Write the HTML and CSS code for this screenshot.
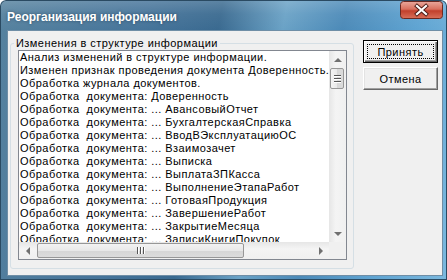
FILE: index.html
```html
<!DOCTYPE html>
<html>
<head>
<meta charset="utf-8">
<link rel="stylesheet" href="styles.css">
</head>
<body>
<div class="window">
  <div class="titlebar">
    <span class="title">Реорганизация информации</span>
    <div class="close">
      <svg width="43" height="18" viewBox="0 0 43 18">
        <defs>
          <linearGradient id="cg" x1="0" y1="0" x2="0" y2="1">
            <stop offset="0" stop-color="#e9a89c"/>
            <stop offset="0.45" stop-color="#d8705e"/>
            <stop offset="0.55" stop-color="#c2402c"/>
            <stop offset="1" stop-color="#d9705a"/>
          </linearGradient>
        </defs>
        <rect x="0.5" y="0.5" width="42" height="17" rx="3" fill="url(#cg)" stroke="#6b2a22"/>
        <path d="M17 5 L26 13 M26 5 L17 13" stroke="#4a1a14" stroke-width="4" stroke-linecap="square"/>
        <path d="M17 5 L26 13 M26 5 L17 13" stroke="#ffffff" stroke-width="2.2" stroke-linecap="square"/>
      </svg>
    </div>
  </div>
  <div class="client">
    <fieldset class="group">
      <legend class="legend">Изменения в структуре информации</legend>
      <div class="listbox">
        <div class="list-main">
          <div class="rows">
            <div class="row">Анализ изменений в структуре информации.</div>
            <div class="row">Изменен признак проведения документа Доверенность.</div>
            <div class="row">Обработка журнала документов.</div>
            <div class="row">Обработка  документа: Доверенность</div>
            <div class="row">Обработка  документа: ... АвансовыйОтчет</div>
            <div class="row">Обработка  документа: ... БухгалтерскаяСправка</div>
            <div class="row">Обработка  документа: ... ВводВЭксплуатациюОС</div>
            <div class="row">Обработка  документа: ... Взаимозачет</div>
            <div class="row">Обработка  документа: ... Выписка</div>
            <div class="row">Обработка  документа: ... ВыплатаЗПКасса</div>
            <div class="row">Обработка  документа: ... ВыполнениеЭтапаРабот</div>
            <div class="row">Обработка  документа: ... ГотоваяПродукция</div>
            <div class="row">Обработка  документа: ... ЗавершениеРабот</div>
            <div class="row">Обработка  документа: ... ЗакрытиеМесяца</div>
            <div class="row">Обработка  документа: ... ЗаписиКнигиПокупок</div>
          </div>
          <div class="vscroll">
            <div class="sbtn"><span class="tri up"></span></div>
            <div class="vthumb"><span class="grip-h"></span><span class="grip-h"></span><span class="grip-h"></span></div>
            <div class="track"></div>
            <div class="sbtn"><span class="tri down"></span></div>
          </div>
        </div>
        <div class="hrow">
          <div class="hscroll">
            <div class="sbtn"><span class="tri left"></span></div>
            <div class="hthumb"><span class="grip-v"></span><span class="grip-v"></span><span class="grip-v"></span></div>
            <div class="track"></div>
            <div class="sbtn"><span class="tri right"></span></div>
          </div>
          <div class="corner"></div>
        </div>
      </div>
    </fieldset>
    <div class="buttons">
      <button class="btn default"><span class="focus">Принять</span></button>
      <button class="btn">Отмена</button>
    </div>
  </div>
</div>
</body>
</html>
```

FILE: styles.css
```css
html, body {
  margin: 0;
  padding: 0;
  width: 447px;
  height: 280px;
  overflow: hidden;
  background: #ffffff;
}

.window {
  box-sizing: border-box;
  width: 447px;
  height: 280px;
  display: flex;
  flex-direction: column;
  border-radius: 6px 6px 0 0;
  background:
    linear-gradient(to bottom, rgba(255,255,255,0.18) 0px, rgba(255,255,255,0.05) 14px, rgba(0,0,0,0) 30px),
    linear-gradient(100deg, #56829f 0%, #46749a 30%, #3a6a90 45%, #6aa2c6 58%, #4c8ab8 70%, #5fa4d2 85%, #7bb8de 100%);
  box-shadow: inset 0 0 0 1px #2a4a62;
}

.titlebar {
  height: 30px;
  display: flex;
  justify-content: space-between;
  align-items: flex-start;
  padding: 0 4px 0 7px;
}

.title {
  margin-top: 9px;
  font-family: "Liberation Sans", Arial, sans-serif;
  font-weight: bold;
  font-size: 12px;
  line-height: 16px;
  color: #ffffff;
  text-shadow: 0 0 3px rgba(20,40,60,0.6);
}

.close {
  margin-top: 1px;
  height: 18px;
}

.close svg {
  display: block;
}

.client {
  flex: 1;
  margin: 0 4px 4px 7px;
  background: #f0f0f0;
  border: 1px solid #6f8ea6;
  display: flex;
  align-items: flex-start;
  font-family: "Liberation Sans", Arial, sans-serif;
  font-size: 11px;
  letter-spacing: 0.45px;
  color: #000000;
}

.group {
  box-sizing: border-box;
  width: 344px;
  height: 232px;
  margin: 6px 0 0 2px;
  padding: 0 6px 8px 7px;
  border: 1px solid #d5dfe5;
  border-radius: 3px;
  min-width: 0;
}

.legend {
  padding: 0 2px;
  margin-left: -4px;
  font-size: 11px;
  line-height: 13px;
}

.listbox {
  box-sizing: border-box;
  width: 329px;
  height: 210px;
  border: 1px solid #828790;
  background: #ffffff;
  display: flex;
  flex-direction: column;
}

.list-main {
  flex: 1;
  display: flex;
  min-height: 0;
}

.rows {
  flex: 1;
  overflow: hidden;
  padding-left: 1px;
}

.row {
  height: 13px;
  line-height: 13px;
  white-space: pre;
}

.vscroll {
  width: 17px;
  display: flex;
  flex-direction: column;
  background: linear-gradient(to right, #e6e6e6, #f4f4f4 40%, #f0f0f0);
}

.hrow {
  height: 17px;
  display: flex;
}

.hscroll {
  flex: 1;
  display: flex;
  background: linear-gradient(to bottom, #e6e6e6, #f4f4f4 40%, #f0f0f0);
}

.corner {
  width: 17px;
  background: #f0f0f0;
}

.sbtn {
  width: 17px;
  height: 17px;
  display: flex;
  align-items: center;
  justify-content: center;
  flex: none;
}

.track {
  flex: 1;
}

.tri {
  width: 0;
  height: 0;
  border: 4px solid transparent;
}

.tri.up {
  border-bottom-color: #707070;
  border-top-width: 0;
}

.tri.down {
  border-top-color: #707070;
  border-bottom-width: 0;
}

.tri.left {
  border-right-color: #707070;
  border-left-width: 0;
}

.tri.right {
  border-left-color: #707070;
  border-right-width: 0;
}

.vthumb {
  box-sizing: border-box;
  height: 21px;
  margin: 0 2px 0 1px;
  border: 1px solid #979797;
  border-radius: 2px;
  background: linear-gradient(to right, #f3f3f3, #e8e8e8 50%, #d6d6d6 51%, #dcdcdc);
  display: flex;
  flex-direction: column;
  align-items: center;
  justify-content: center;
  gap: 2px;
}

.grip-h {
  width: 7px;
  height: 1px;
  background: #555555;
  box-shadow: 0 1px 0 #ffffff;
}

.hthumb {
  box-sizing: border-box;
  width: 207px;
  margin: 1px 0 1px 1px;
  border: 1px solid #979797;
  border-radius: 2px;
  background: linear-gradient(to bottom, #f3f3f3, #e8e8e8 50%, #d6d6d6 51%, #dcdcdc);
  display: flex;
  align-items: center;
  justify-content: center;
  gap: 2px;
}

.grip-v {
  width: 1px;
  height: 7px;
  background: #555555;
  box-shadow: 1px 0 0 #ffffff;
}

.buttons {
  margin: 9px 0 0 9px;
  display: flex;
  flex-direction: column;
  gap: 4px;
}

.btn {
  box-sizing: border-box;
  width: 75px;
  height: 23px;
  padding: 0;
  margin: 0;
  font-family: "Liberation Sans", Arial, sans-serif;
  font-size: 11px;
  letter-spacing: 0.45px;
  color: #000000;
  background: #f0f0f0;
  border: 1px solid;
  border-color: #ffffff #696969 #696969 #ffffff;
  box-shadow: inset -1px -1px 0 #a0a0a0, inset 1px 1px 0 #e3e3e3;
  display: flex;
  align-items: center;
  justify-content: center;
}

.btn.default {
  border: 1px solid #000000;
  box-shadow: inset 1px 1px 0 #ffffff, inset -1px -1px 0 #696969, inset -2px -2px 0 #a0a0a0;
  padding: 3px;
}

.focus {
  box-sizing: border-box;
  width: 100%;
  height: 100%;
  border: 1px dotted #000000;
  display: flex;
  align-items: center;
  justify-content: center;
}
```
